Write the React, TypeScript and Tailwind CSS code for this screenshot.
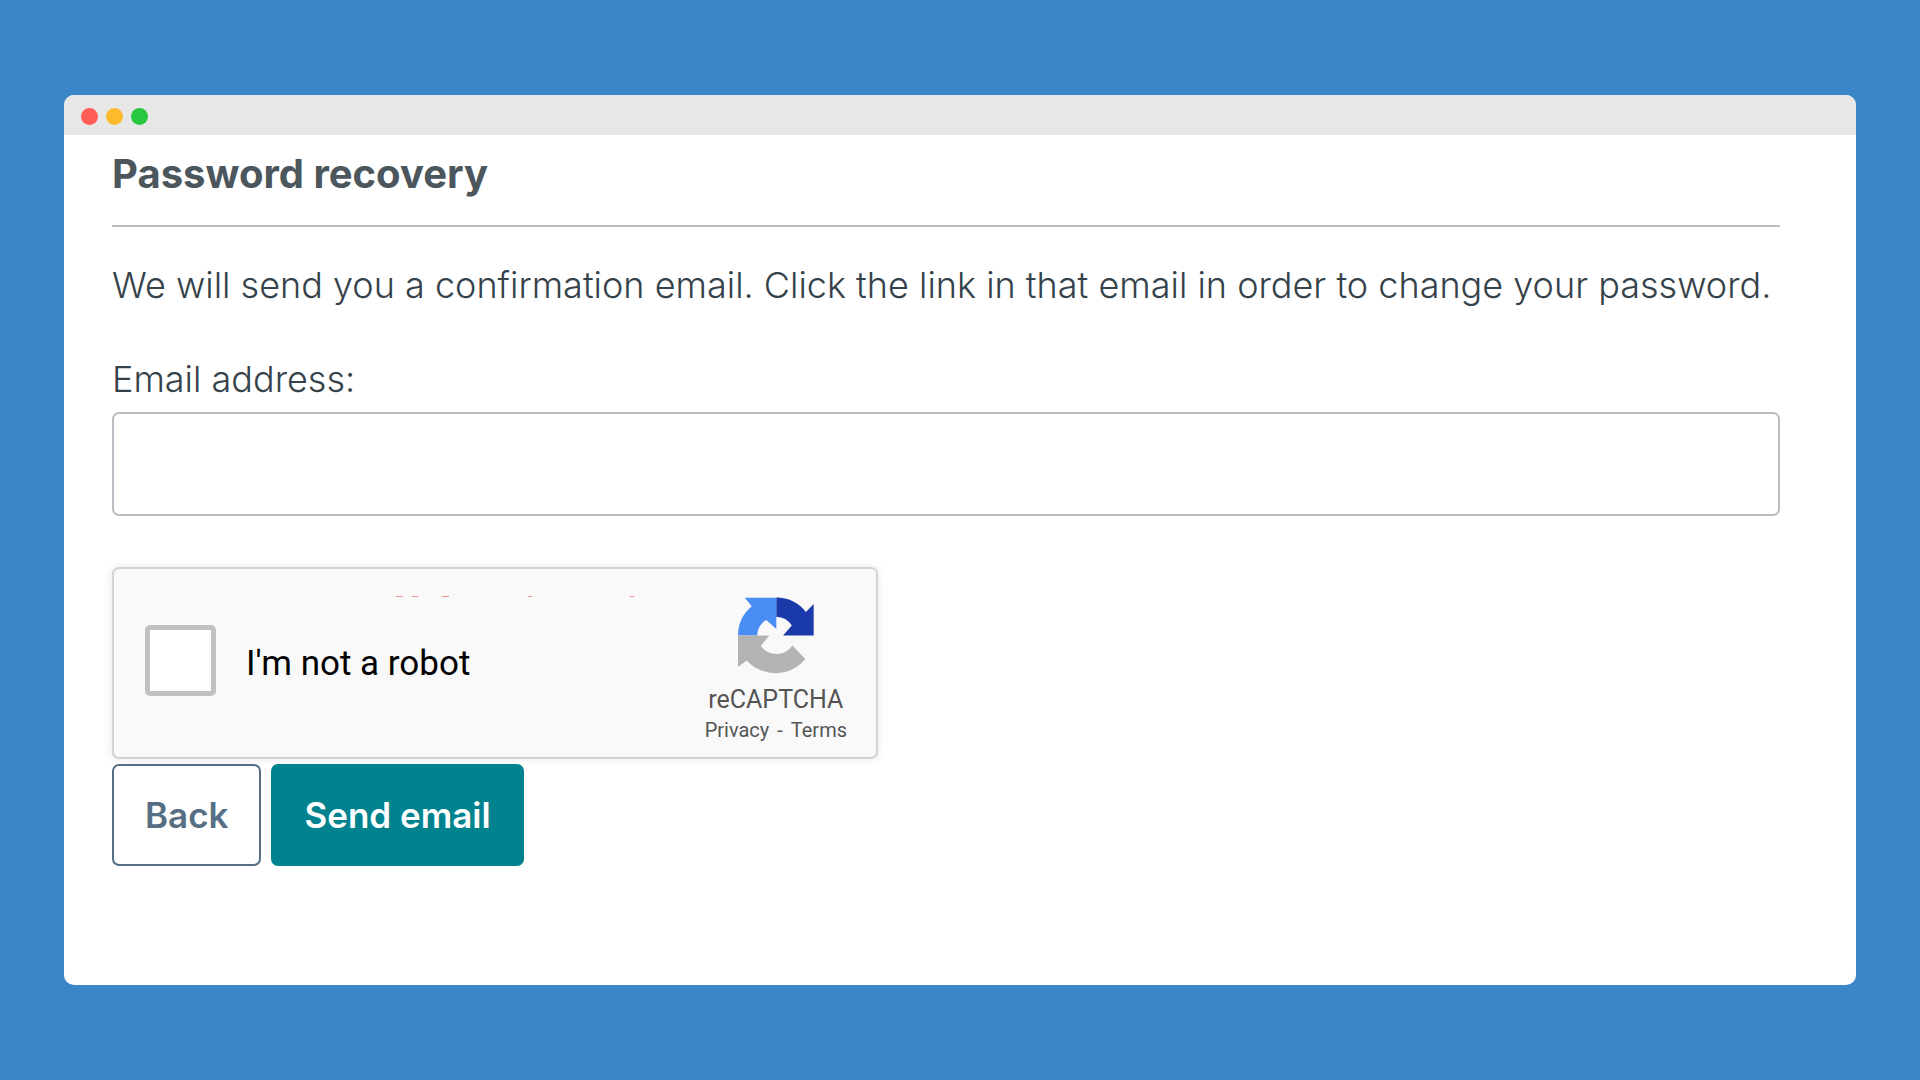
import { useState } from "react";

function RecaptchaLogo() {
  return (
    <svg viewBox="0 0 226 228" className="h-[77px] w-[76px]" aria-hidden="true">
      <path d="M20 2H114V95L84 68A57 57 0 0 0 57 114H0A114 114 0 0 1 41 27Z" fill="#4a8df3" />
      <path d="M114 1A114 114 0 0 1 202 44L225 20V114H134L160 84A57 57 0 0 0 114 58Z" fill="#1b3aaa" />
      <path d="M0 114H93L68 145A57 57 0 0 0 162 144L200 184A114 114 0 0 1 26 188L0 208Z" fill="#b3b3b3" />
    </svg>
  );
}

function TitleBar() {
  return (
    <div className="flex h-10 items-center gap-2 bg-[#e7e7e7] px-[17px] pt-0.5">
      <span className="h-[17px] w-[17px] rounded-full bg-[#ff5d55]" />
      <span className="h-[17px] w-[17px] rounded-full bg-[#fdba2d]" />
      <span className="h-[17px] w-[17px] rounded-full bg-[#27c840]" />
    </div>
  );
}

function Recaptcha() {
  const [checked, setChecked] = useState(false);

  return (
    <div className="relative flex h-48 max-w-[766px] justify-between rounded-[7px] border-2 border-[#d3d3d3] bg-[#f9f9f9] pr-[29px] pl-[31px] font-[Roboto,sans-serif] shadow-[0_0_8px_rgba(0,0,0,0.1)]">
      {/* clipped warning text */}
      <svg
        viewBox="0 0 240 2"
        className="absolute top-[27px] left-[280px] h-0.5 w-60"
        fill="#f0938d"
        aria-hidden="true"
      >
        <path d="M2 0h7v1h-7zM18 0h6v1h-6zM48 0h7v1h-7zM134 0h4v1h-4zM236 0h4v1h-4z" />
      </svg>
      <div className="flex items-center gap-[30px] pb-1.5">
        <input
          id="robot"
          type="checkbox"
          checked={checked}
          onChange={(e) => setChecked(e.target.checked)}
          className="h-[71px] w-[71px] appearance-none rounded-[5px] border-[5px] border-[#c1c1c1] bg-white checked:bg-[#c1c1c1]"
        />
        <label htmlFor="robot" className="pt-2 text-[35px] leading-10 text-black">
          I'm not a robot
        </label>
      </div>
      <div className="flex flex-col items-center pt-7 text-[#555]">
        <RecaptchaLogo />
        <p className="mt-3 text-[25px] leading-7">reCAPTCHA</p>
        <p className="flex gap-2 text-xl leading-8">
          <a href="#privacy">Privacy</a>
          <span>-</span>
          <a href="#terms">Terms</a>
        </p>
      </div>
    </div>
  );
}

export default function App() {
  return (
    <div className="min-h-screen bg-[#3b86c9] px-16 py-[95px] font-[Inter,sans-serif] text-[#4b565d]">
      <main className="overflow-hidden rounded-[10px] bg-white">
        <TitleBar />
        <form className="pr-[76px] pb-[119px] pl-12" onSubmit={(e) => e.preventDefault()}>
          <h1 className="border-b-2 border-[#b9bfc4] pt-5 pb-8 text-[40px] leading-[38px] font-bold">
            Password recovery
          </h1>
          <p className="pt-[34px] text-[36px] leading-12 font-light text-[#36424a]">
            We will send you a confirmation email. Click the link in that email in order to change your password.
          </p>
          <label htmlFor="email" className="mt-[46px] block text-[36px] leading-12 font-light text-[#36424a]">
            Email address:
          </label>
          <input
            id="email"
            type="email"
            className="mt-[9px] mb-[51px] block h-[104px] w-full rounded-[7px] border-2 border-[#b9bfc4] bg-white px-6 text-[36px] font-light"
          />
          <Recaptcha />
          <div className="mt-[5px] flex gap-[10px] text-[35px] leading-12 font-semibold">
            <button type="button" className="rounded-[7px] border-2 border-[#566f84] px-[31px] py-[25px] text-[#566f84]">
              Back
            </button>
            <button type="submit" className="rounded-[7px] border-2 border-[#00838f] bg-[#00838f] px-[31px] py-[25px] text-white">
              Send email
            </button>
          </div>
        </form>
      </main>
    </div>
  );
}
